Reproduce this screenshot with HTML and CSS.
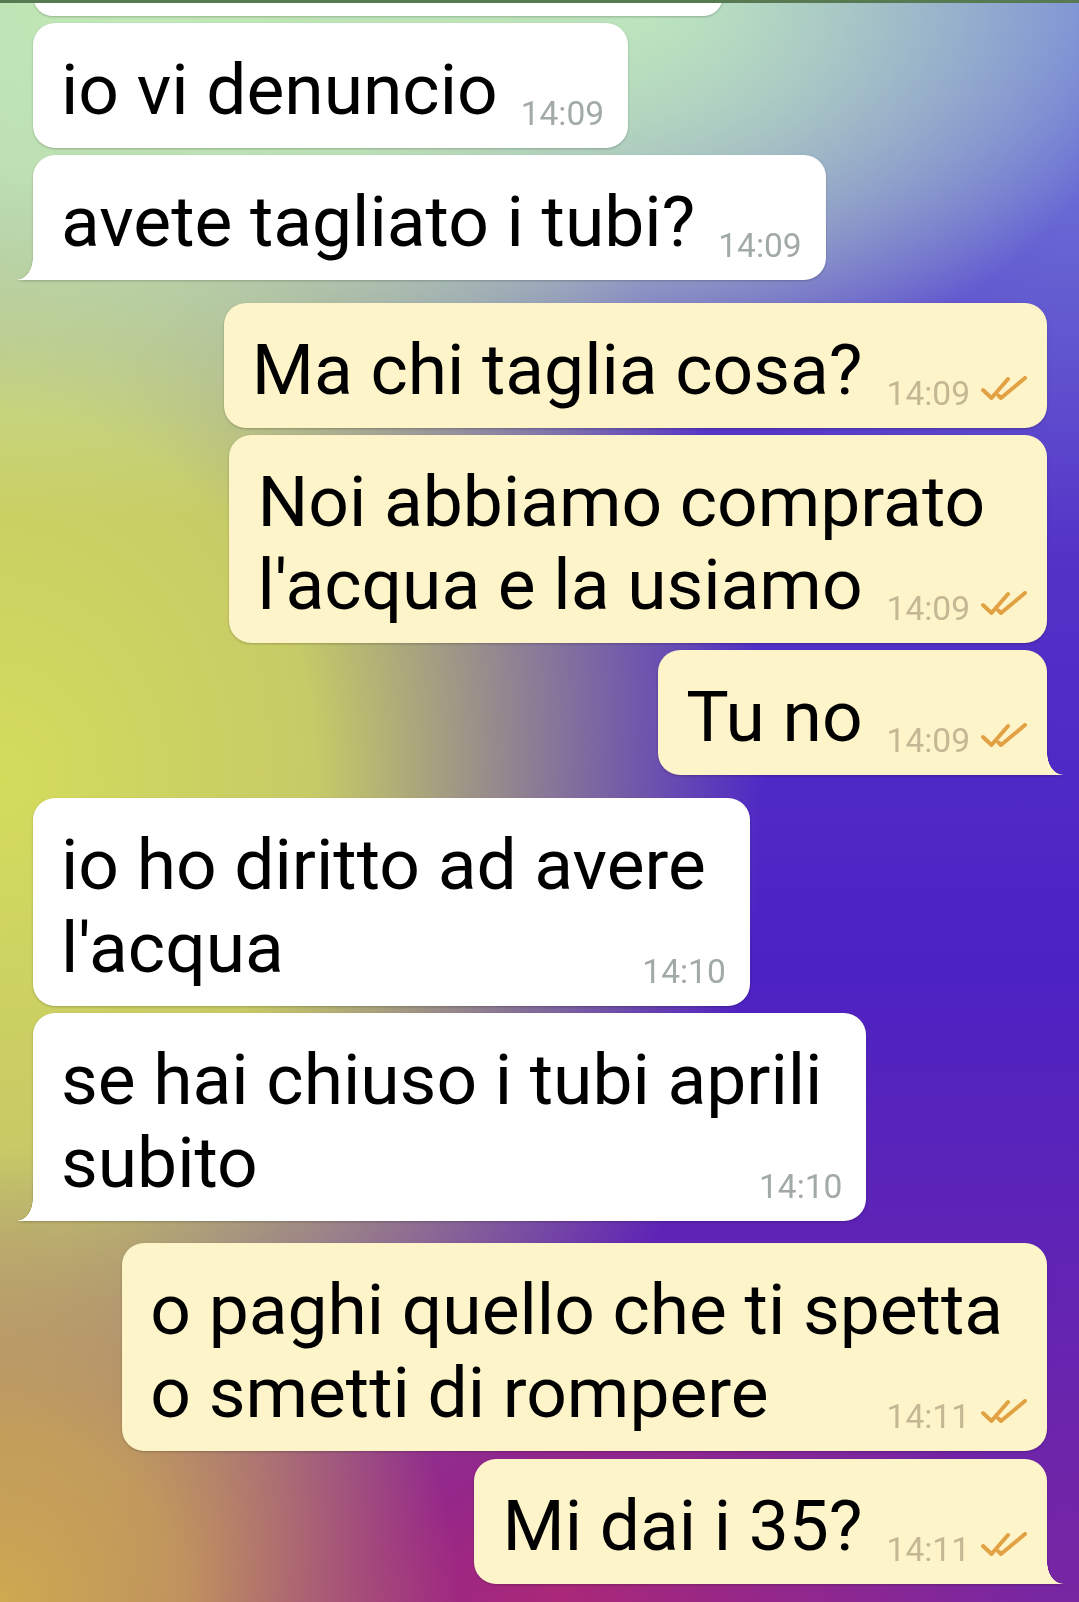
FILE: index.html
```html
<!DOCTYPE html>
<html lang="it">

<head>
  <meta charset="UTF-8">
  <title>Chat</title>
  <link rel="stylesheet" href="styles.css">
</head>

<body>
  <div class="topbar"></div>

  <div class="chat">
    <!-- previous message, cut off by the toolbar -->
    <div class="msg in stub"></div>

    <div class="msg in">io vi denuncio<span class="meta"><span class="time">14:09</span></span></div>
    <div class="msg in tail">avete tagliato i tubi?<span class="meta"><span class="time">14:09</span></span></div>

    <div class="msg out group">Ma chi taglia cosa?<span class="meta"><span class="time">14:09</span><svg class="ticks" viewBox="0 0 46 24"><path d="M2 14 L10.5 22 L27 3 M17.5 19.5 L20 22 L44 2"/></svg></span></div>
    <div class="msg out">Noi abbiamo comprato<br>l'acqua e la usiamo<span class="meta"><span class="time">14:09</span><svg class="ticks" viewBox="0 0 46 24"><path d="M2 14 L10.5 22 L27 3 M17.5 19.5 L20 22 L44 2"/></svg></span></div>
    <div class="msg out tail">Tu no<span class="meta"><span class="time">14:09</span><svg class="ticks" viewBox="0 0 46 24"><path d="M2 14 L10.5 22 L27 3 M17.5 19.5 L20 22 L44 2"/></svg></span></div>

    <div class="msg in group">io ho diritto ad avere<br>l'acqua<span class="meta"><span class="time">14:10</span></span></div>
    <div class="msg in tail">se hai chiuso i tubi aprili<br>subito<span class="meta"><span class="time">14:10</span></span></div>

    <div class="msg out group">o paghi quello che ti spetta<br>o smetti di rompere<span class="meta"><span class="time">14:11</span><svg class="ticks" viewBox="0 0 46 24"><path d="M2 14 L10.5 22 L27 3 M17.5 19.5 L20 22 L44 2"/></svg></span></div>
    <div class="msg out tail">Mi dai i 35?<span class="meta"><span class="time">14:11</span><svg class="ticks" viewBox="0 0 46 24"><path d="M2 14 L10.5 22 L27 3 M17.5 19.5 L20 22 L44 2"/></svg></span></div>
  </div>
</body>

</html>
```

FILE: styles.css
```css
body {
  margin: 0;
  width: 1079px;
  height: 1602px;
  overflow: hidden;
  font-family: Roboto, "Noto Sans", sans-serif;
  background:
    radial-gradient(ellipse 1000px 520px at 150px 0, rgba(194, 234, 182, 1) 0%, rgba(194, 234, 182, 0.9) 35%, rgba(194, 234, 182, 0) 100%),
    radial-gradient(ellipse 520px 380px at 640px 0, rgba(178, 220, 208, 1) 0%, rgba(178, 220, 208, 0) 100%),
    radial-gradient(ellipse 480px 560px at 1079px 0, rgba(112, 128, 218, 1) 0%, rgba(112, 128, 218, 0) 100%),
    radial-gradient(ellipse 460px 420px at 0 1602px, rgba(206, 170, 80, 1) 0%, rgba(206, 170, 80, 0.8) 40%, rgba(206, 170, 80, 0) 100%),
    radial-gradient(ellipse 480px 360px at 560px 1602px, rgba(170, 40, 120, 1) 0%, rgba(170, 40, 120, 0) 100%),
    radial-gradient(ellipse 900px 1050px at 0 780px, rgba(212, 220, 92, 1) 0%, rgba(212, 220, 92, 0.9) 35%, rgba(212, 220, 92, 0) 85%),
    linear-gradient(180deg, #5e48ca 0%, #4c22c4 60%, #7826a2 100%);
}

/* Toolbar shadow edge */
.topbar {
  height: 3px;
  background-color: #587a52;
  position: relative;
  z-index: 1;
}

.chat {
  display: flex;
  flex-direction: column;
  gap: 7.2px;
  padding: 0 32px 0 33px;
}

.msg {
  position: relative;
  padding: 25px 44px 17px 28px;
  font-size: 71.3px;
  line-height: 83px;
  color: #000;
  border-radius: 22px;
  filter: drop-shadow(0 1px 1px rgba(0, 0, 0, 0.22));
}

.msg.group {
  margin-top: 15.3px;
}

.in {
  align-self: flex-start;
  background-color: #fff;
}

.out {
  align-self: flex-end;
  background-color: #fdf4ca;
}

.stub {
  width: 690px;
  height: 40px;
  padding: 0;
  margin-top: -27px;
}

/* Time + ticks sit on the last line, bottom right */
.meta {
  float: right;
  display: flex;
  align-items: flex-start;
  gap: 11px;
  margin-top: 50px;
  margin-left: 23px;
  margin-right: -20px;
  font-size: 33.5px;
  line-height: 32px;
}

.in .time { color: #a2aaa8; }
.out .time { color: #c4b894; }

.out .meta {
  margin-left: 24px;
  margin-right: -24px;
}

.ticks {
  width: 46px;
  height: 24px;
  margin-top: -2px;
  fill: none;
  stroke: #e2a244;
  stroke-width: 4;
  stroke-linecap: round;
  stroke-linejoin: round;
}

/* Bubble tails */
.in.tail { border-bottom-left-radius: 0; }
.out.tail { border-bottom-right-radius: 0; }

.tail::after {
  content: "";
  position: absolute;
  bottom: 0;
  width: 16px;
  height: 22px;
}

.in.tail::after {
  right: 100%;
  background: radial-gradient(16px 22px at 0 0, rgba(255, 255, 255, 0) 97%, #fff 100%);
}

.out.tail::after {
  left: 100%;
  background: radial-gradient(16px 22px at 100% 0, rgba(253, 244, 202, 0) 97%, #fdf4ca 100%);
}
```
